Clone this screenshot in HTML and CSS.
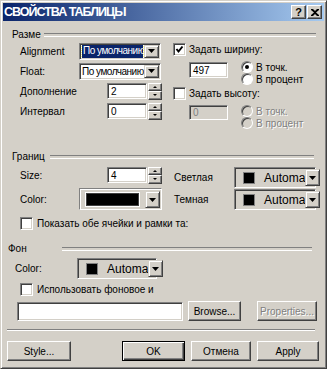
FILE: index.html
```html
<!DOCTYPE html>
<html lang="ru">
<head>
  <meta charset="UTF-8" />
  <title>Свойства таблицы</title>
  <link rel="stylesheet" href="styles.css">
</head>
<body>
  <div class="window">
    <div class="titlebar">
      <span class="title">СВОЙСТВА ТАБЛИЦЫ</span>
      <div class="title-buttons">
        <div class="tb-btn">?</div>
        <div class="tb-btn">
          <svg width="8" height="7" viewBox="0 0 8 7"><path d="M0 0h2l2 2 2-2h2v1L5 3.5 8 6v1H6L4 5 2 7H0V6l3-2.5L0 1z" fill="#000"/></svg>
        </div>
      </div>
    </div>

    <!-- Размер -->
    <div class="legend legend-size"><span>Разме</span></div>
    <div class="size-cols">
      <div class="col">
        <div class="row">
          <span class="lbl lbl-a">Alignment</span>
          <div class="combo focused"><span class="combo-text"><span class="sel">По умолчанию</span></span><span class="arrow-btn"><svg width="7" height="4"><polygon points="0,0 7,0 3.5,4" fill="#000"/></svg></span></div>
        </div>
        <div class="row">
          <span class="lbl lbl-a">Float:</span>
          <div class="combo"><span class="combo-text">По умолчанию</span><span class="arrow-btn"><svg width="7" height="4"><polygon points="0,0 7,0 3.5,4" fill="#000"/></svg></span></div>
        </div>
        <div class="row">
          <span class="lbl lbl-b">Дополнение</span>
          <div class="field field-num">2</div>
          <div class="spin"><span class="spin-up"></span><span class="spin-down"></span></div>
        </div>
        <div class="row">
          <span class="lbl lbl-b">Интервал</span>
          <div class="field field-num">0</div>
          <div class="spin"><span class="spin-up"></span><span class="spin-down"></span></div>
        </div>
      </div>

      <div class="col">
        <div class="check-row">
          <span class="check"><svg width="9" height="9"><polyline points="1.5,4 3.5,6.5 7.5,1.5" fill="none" stroke="#000" stroke-width="2"/></svg></span>
          <span>Задать ширину:</span>
        </div>
        <div class="opt-row">
          <div class="field field-dim">497</div>
          <div class="radios">
            <div class="radio-item"><span class="radio on"></span><span>В точк.</span></div>
            <div class="radio-item"><span class="radio"></span><span>В процент</span></div>
          </div>
        </div>
        <div class="check-row">
          <span class="check"></span>
          <span>Задать высоту:</span>
        </div>
        <div class="opt-row opt-off">
          <div class="field field-dim disabled">0</div>
          <div class="radios">
            <div class="radio-item"><span class="radio"></span><span class="dis">В точк.</span></div>
            <div class="radio-item"><span class="radio"></span><span class="dis">В процент</span></div>
          </div>
        </div>
      </div>
    </div>

    <!-- Границы -->
    <div class="legend legend-border"><span>Границ</span></div>
    <div class="border-cols">
      <div class="col">
        <div class="row row-size">
          <span class="lbl lbl-b">Size:</span>
          <div class="field field-num">4</div>
          <div class="spin"><span class="spin-up"></span><span class="spin-down"></span></div>
        </div>
        <div class="row row-color">
          <span class="lbl lbl-a">Color:</span>
          <div class="colorbtn">
            <span class="colorbar"></span>
            <span class="arrow-btn"><svg width="7" height="4"><polygon points="0,0 7,0 3.5,4" fill="#000"/></svg></span>
          </div>
        </div>
      </div>
      <div class="col">
        <div class="row row-light">
          <span class="lbl lbl-c">Светлая</span>
          <div class="auto-combo"><span class="swatch"></span><span class="auto-text">Automa</span><span class="arrow-btn"><svg width="7" height="4"><polygon points="0,0 7,0 3.5,4" fill="#000"/></svg></span></div>
        </div>
        <div class="row row-dark">
          <span class="lbl lbl-c">Темная</span>
          <div class="auto-combo"><span class="swatch"></span><span class="auto-text">Automa</span><span class="arrow-btn"><svg width="7" height="4"><polygon points="0,0 7,0 3.5,4" fill="#000"/></svg></span></div>
        </div>
      </div>
    </div>
    <div class="check-row check-wide check-borders">
      <span class="check"></span>
      <span>Показать обе ячейки и рамки та:</span>
    </div>

    <!-- Фон -->
    <div class="legend legend-bg"><span>Фон</span></div>
    <div class="row row-bg">
      <span class="lbl lbl-d">Color:</span>
      <div class="auto-combo auto-small"><span class="swatch"></span><span class="auto-text">Automa</span><span class="arrow-btn"><svg width="7" height="4"><polygon points="0,0 7,0 3.5,4" fill="#000"/></svg></span></div>
    </div>
    <div class="check-row check-wide check-image">
      <span class="check"></span>
      <span>Использовать фоновое и</span>
    </div>
    <div class="file-row">
      <div class="field field-file"></div>
      <div class="btn btn-browse">Browse...</div>
      <div class="btn btn-props dis">Properties...</div>
    </div>

    <div class="separator"></div>

    <div class="button-row">
      <div class="btn btn-style">Style...</div>
      <div class="btn btn-ok">OK</div>
      <div class="btn btn-cancel">Отмена</div>
      <div class="btn btn-apply">Apply</div>
    </div>
  </div>
</body>
</html>
```

FILE: styles.css
```css
* {
  margin: 0;
  padding: 0;
  box-sizing: border-box;
}
body {
  background: #d4d0c8;
  font-family: "Liberation Sans", Arial, sans-serif;
  font-size: 10px;
  color: #000;
}
/* Окно */
.window {
  width: 327px;
  height: 369px;
  background: #d4d0c8;
  border: 1px solid;
  border-color: #d4d0c8 #404040 #404040 #d4d0c8;
  box-shadow: inset 1px 1px #fff, inset -1px -1px #808080;
  padding: 2px;
  display: flex;
  flex-direction: column;
}
.titlebar {
  height: 18px;
  flex-shrink: 0;
  background: linear-gradient(to right, #0a246a, #a6caf0);
  display: flex;
  align-items: center;
  padding: 0 2px 0 1px;
}
.title {
  color: #fff;
  font-weight: bold;
  font-size: 12.5px;
  letter-spacing: -1px;
}
.title-buttons {
  margin-left: auto;
  display: flex;
  gap: 1px;
}
.tb-btn {
  width: 15px;
  height: 14px;
  background: #d4d0c8;
  border: 1px solid;
  border-color: #fff #404040 #404040 #fff;
  box-shadow: inset -1px -1px #808080;
  display: flex;
  align-items: center;
  justify-content: center;
  font-weight: bold;
  font-size: 11px;
}
/* Заголовки групп */
.legend {
  display: flex;
  align-items: center;
  height: 13px;
  flex-shrink: 0;
}
.legend::after {
  content: "";
  flex: 1;
  height: 2px;
  border-top: 1px solid #808080;
  border-bottom: 1px solid #fff;
  margin-left: 3px;
}
.legend-size {
  margin-top: 7px;
  padding: 0 8px 0 9px;
}
.legend-border {
  margin-top: 21px;
  padding: 0 10px 0 9px;
}
.legend-border::after {
  margin-left: 5px;
}
.legend-bg {
  margin-top: 7px;
  padding: 0 12px 0 5px;
}
.legend-bg::after {
  margin-left: 35px;
}
/* Колонки */
.size-cols, .border-cols {
  display: grid;
  grid-template-columns: 142px 143px;
  column-gap: 11px;
  padding-left: 17px;
}
.border-cols {
  column-gap: 12px;
  grid-template-columns: 142px 142px;
}
.col {
  display: flex;
  flex-direction: column;
}
.row {
  display: flex;
  align-items: center;
  height: 20px;
}
.lbl-a { width: 59px; }
.lbl-b { width: 87px; }
.lbl-c { width: 60px; }
.lbl-d { width: 62px; }
/* Поля */
.field {
  background: #fff;
  border: 1px solid;
  border-color: #808080 #fff #fff #808080;
  box-shadow: inset 1px 1px #404040, inset -1px -1px #d4d0c8;
  padding: 0 3px;
  display: flex;
  align-items: center;
  font-size: 10px;
}
.field-num {
  width: 40px;
  height: 16px;
}
.field-dim {
  width: 39px;
  height: 16px;
}
.field.disabled {
  background: #d4d0c8;
  color: #808080;
}
.field-file {
  width: 166px;
  height: 19px;
  margin-top: 1px;
}
.spin {
  width: 14px;
  height: 17px;
  margin-left: 1px;
  display: flex;
  flex-direction: column;
}
.spin span {
  flex: 1;
  background: #d4d0c8;
  border: 1px solid;
  border-color: #fff #404040 #404040 #fff;
  box-shadow: inset -1px -1px #808080;
  display: flex;
  align-items: center;
  justify-content: center;
}
.spin-up::before, .spin-down::before {
  content: "";
  border-left: 2px solid transparent;
  border-right: 2px solid transparent;
}
.spin-up::before { border-bottom: 2px solid #000; }
.spin-down::before { border-top: 2px solid #000; }
/* Выпадающие списки */
.combo {
  width: 82px;
  height: 17px;
  background: #fff;
  border: 1px solid;
  border-color: #808080 #fff #fff #808080;
  box-shadow: inset 1px 1px #404040, inset -1px -1px #d4d0c8;
  display: flex;
  padding: 1px;
}
.combo-text {
  flex: 1;
  overflow: hidden;
  white-space: nowrap;
  padding: 1px 0 0 1px;
  font-size: 10px;
  letter-spacing: -0.5px;
  line-height: 12px;
}
.combo.focused .combo-text {
  padding: 1px;
}
.sel {
  display: block;
  height: 13px;
  background: #0a246a;
  color: #fff;
  outline: 1px dotted #ffff80;
  padding-left: 1px;
  margin-top: -1px;
}
.arrow-btn {
  width: 15px;
  flex-shrink: 0;
  background: #d4d0c8;
  border: 1px solid;
  border-color: #d4d0c8 #404040 #404040 #d4d0c8;
  box-shadow: inset 1px 1px #fff, inset -1px -1px #808080;
  display: flex;
  align-items: center;
  justify-content: center;
}
/* Флажки и переключатели */
.check-row {
  display: flex;
  gap: 3px;
  height: 20px;
  align-items: flex-start;
  padding-top: 2px;
  line-height: 13px;
}
.check {
  width: 13px;
  height: 13px;
  background: #fff;
  border: 1px solid;
  border-color: #808080 #fff #fff #808080;
  box-shadow: inset 1px 1px #404040, inset -1px -1px #d4d0c8;
  display: flex;
  align-items: center;
  justify-content: center;
  flex-shrink: 0;
}
.opt-row {
  display: flex;
  height: 24px;
  padding-left: 16px;
}
.opt-row .field {
  margin-top: 1px;
}
.opt-off .field {
  margin-top: 0;
  height: 15px;
}
.radios {
  margin-left: 13px;
  display: flex;
  flex-direction: column;
}
.radio-item {
  display: flex;
  align-items: center;
  gap: 3px;
  height: 12px;
}
.radio {
  width: 12px;
  height: 12px;
  border-radius: 50%;
  border: 1px solid;
  border-color: #808080 #fff #fff #808080;
  box-shadow: inset 1px 1px #404040;
  background: #fff;
  display: flex;
  align-items: center;
  justify-content: center;
}
.radio.on::after {
  content: "";
  width: 4px;
  height: 4px;
  border-radius: 50%;
  background: #000;
}
.opt-off .radio {
  background: #d4d0c8;
}
.dis {
  color: #808080;
  text-shadow: 1px 1px #fff;
}
/* Границы */
.row-size {
  height: 18px;
  margin-top: 3px;
}
.row-color {
  height: 22px;
  margin-top: 4px;
}
.row-light {
  height: 21px;
  margin-top: 4px;
}
.row-dark {
  height: 21px;
  margin-top: 1px;
}
.colorbtn {
  width: 83px;
  height: 22px;
  border: 1px solid;
  border-color: #808080 #fff #fff #808080;
  box-shadow: inset 1px 1px #fff;
  background: #d4d0c8;
  display: flex;
  align-items: stretch;
  padding: 2px 1px 1px 2px;
}
.colorbar {
  width: 56px;
  margin: 2px 6px 2px 4px;
  background: #000;
  border: 1px solid #404040;
  outline: 1px solid #fff;
}
.colorbtn .arrow-btn {
  margin-left: auto;
}
.auto-combo {
  width: 82px;
  height: 21px;
  border: 1px solid;
  border-color: #808080 #fff #fff #808080;
  box-shadow: inset 1px 1px #404040;
  background: #d4d0c8;
  display: flex;
  align-items: center;
  padding: 1px 1px 1px 8px;
}
.swatch {
  width: 12px;
  height: 12px;
  background: #000;
  border: 1px solid #808080;
  flex-shrink: 0;
}
.auto-text {
  flex: 1;
  white-space: nowrap;
  margin-left: 9px;
  font-size: 12px;
}
.auto-combo .arrow-btn {
  align-self: stretch;
}
.auto-small {
  width: 80px;
}
.check-wide {
  padding-left: 17px;
  gap: 4px;
}
.check-borders {
  margin-top: 5px;
}
/* Фон */
.row-bg {
  height: 21px;
  margin-top: 3px;
  padding-left: 12px;
}
.check-image {
  margin-top: 2px;
}
.file-row {
  display: flex;
  align-items: flex-start;
  padding-left: 14px;
}
/* Кнопки */
.btn {
  height: 20px;
  background: #d4d0c8;
  border: 1px solid;
  border-color: #fff #404040 #404040 #fff;
  box-shadow: inset -1px -1px #808080;
  display: flex;
  align-items: center;
  justify-content: center;
  font-size: 10px;
}
.btn-browse {
  width: 53px;
  margin-left: 5px;
}
.btn-props {
  width: 60px;
  margin-left: 16px;
}
.separator {
  height: 2px;
  margin: 8px 0 0 4px;
  width: 308px;
  border-top: 1px solid #808080;
  border-bottom: 1px solid #fff;
}
.button-row {
  display: flex;
  margin-top: 10px;
  padding-left: 4px;
}
.btn-style { width: 64px; }
.btn-ok {
  width: 63px;
  margin-left: 51px;
  border: 1px solid #000;
  box-shadow: inset 1px 1px #fff, inset -1px -1px #404040, inset -2px -2px #808080;
}
.btn-cancel {
  width: 60px;
  margin-left: 6px;
}
.btn-apply {
  width: 62px;
  margin-left: 6px;
}
```
